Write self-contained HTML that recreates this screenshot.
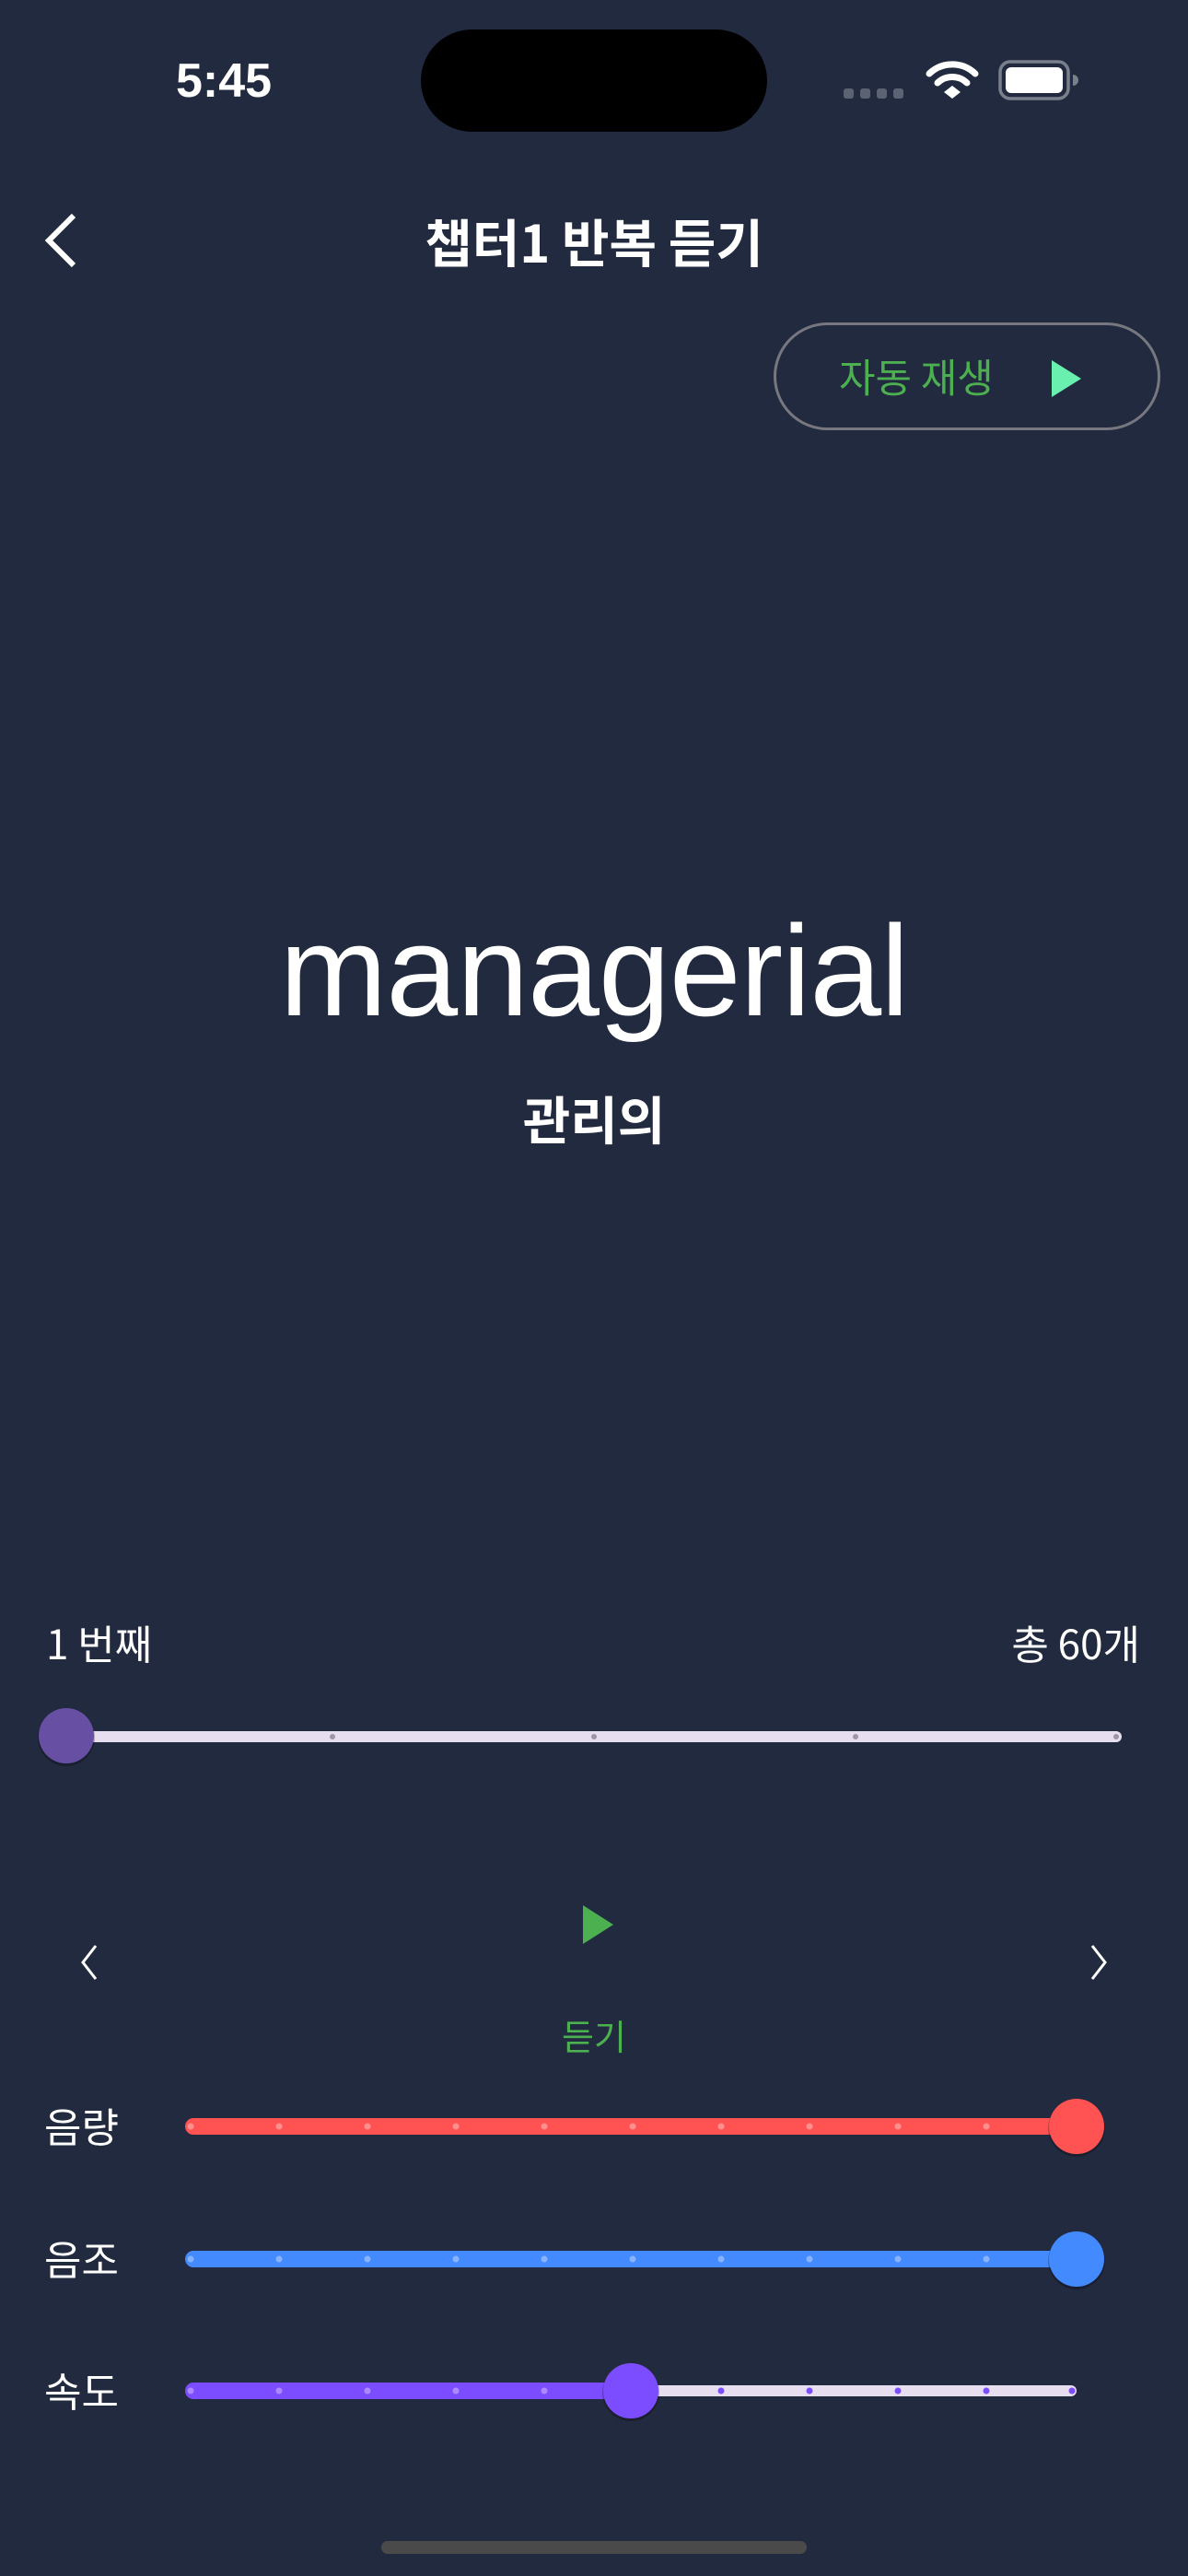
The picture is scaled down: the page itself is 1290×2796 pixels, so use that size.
<!DOCTYPE html>
<html><head><meta charset="utf-8"><style>
html,body{margin:0;padding:0}
body{width:1290px;height:2796px;background:#222a3f;position:relative;overflow:hidden;font-family:"Liberation Sans","Noto Sans CJK KR",sans-serif;color:#fff}
.t{position:absolute;white-space:nowrap;line-height:1}
</style></head><body>
<div class="t" style="left:183px;top:62px;font-size:52px;font-weight:700;width:120px;text-align:center">5:45</div>
<div class="t" style="left:0;top:234px;width:1290px;text-align:center;font-size:56px;font-weight:700;font-family:'Noto Sans CJK KR',sans-serif">챕터1 반복 듣기</div>
<div style="position:absolute;left:840px;top:350px;width:420px;height:117px;border:3px solid #77777f;border-radius:60px;box-sizing:border-box"></div>
<div class="t" style="left:911px;top:387px;font-size:43px;color:#4caf50;font-family:'Noto Sans CJK KR',sans-serif">자동 재생</div>
<div class="t" style="left:0;top:984px;width:1290px;text-align:center;font-size:140px;font-weight:400;letter-spacing:-1px">managerial</div>
<div class="t" style="left:0;top:1186px;width:1290px;text-align:center;font-size:56px;font-weight:700;font-family:'Noto Sans CJK KR',sans-serif">관리의</div>
<div class="t" style="left:50px;top:1760px;font-size:44px;font-family:'Noto Sans CJK KR',sans-serif">1 번째</div>
<div class="t" style="right:52px;top:1760px;font-size:44px;font-family:'Noto Sans CJK KR',sans-serif">총 60개</div>
<div class="t" style="left:0;top:2190px;width:1290px;text-align:center;font-size:38px;color:#4caf50;font-family:'Noto Sans CJK KR',sans-serif">듣기</div>
<div class="t" style="left:48px;top:2284px;font-size:44px;font-family:'Noto Sans CJK KR',sans-serif">음량</div>
<div class="t" style="left:48px;top:2428px;font-size:44px;font-family:'Noto Sans CJK KR',sans-serif">음조</div>
<div class="t" style="left:48px;top:2571px;font-size:44px;font-family:'Noto Sans CJK KR',sans-serif">속도</div>
<svg width="1290" height="2796" style="position:absolute;left:0;top:0" xmlns="http://www.w3.org/2000/svg">
<rect x="457" y="32" width="376" height="111" rx="55.5" fill="#000"/>
<g fill="#5b6272"><rect x="916" y="96" width="11" height="11" rx="3"/><rect x="934" y="96" width="11" height="11" rx="3"/><rect x="952" y="96" width="11" height="11" rx="3"/><rect x="970" y="96" width="11" height="11" rx="3"/></g>
<g fill="none" stroke="#fff" stroke-width="7" stroke-linecap="round"><path d="M1009 80 A36 36 0 0 1 1059 80"/><path d="M1018 90 A23 23 0 0 1 1050 90"/></g>
<path d="M1025 100 L1034 93 L1043 100 L1034 107 Z" fill="#fff"/>
<rect x="1086" y="67" width="74" height="40" rx="11" fill="none" stroke="#7a7f8c" stroke-width="3.5"/>
<rect x="1092" y="73" width="62" height="28" rx="6" fill="#fff"/>
<path d="M1165 81 a6 6 0 0 1 0 12 z" fill="#7a7f8c"/>
<path d="M80 234 L53 261 L80 288" fill="none" stroke="#fff" stroke-width="6"/>
<path d="M1142 391 L1174 411 L1142 431 Z" fill="#69f0ae"/>
<rect x="66" y="1879" width="1152" height="12" rx="6" fill="#e7def0"/>
<g fill="#9e96a8"><circle cx="361" cy="1885" r="3"/><circle cx="645" cy="1885" r="3"/><circle cx="929" cy="1885" r="3"/><circle cx="1212" cy="1885" r="3"/></g>
<circle cx="72" cy="1886" r="31" fill="#000" opacity=".25"/>
<circle cx="72" cy="1884" r="30" fill="#6750a4"/>
<path d="M633 2068 L666 2089 L633 2110 Z" fill="#4caf50"/>
<path d="M104 2112 L90 2130 L104 2148" fill="none" stroke="#fff" stroke-width="3"/>
<path d="M1186 2112 L1200 2130 L1186 2148" fill="none" stroke="#fff" stroke-width="3"/>
<rect x="201" y="2299" width="968" height="18" rx="9" fill="#ff5252"/>
<g fill="#ffffff" opacity=".35"><circle cx="207" cy="2308" r="3.5"/><circle cx="303" cy="2308" r="3.5"/><circle cx="399" cy="2308" r="3.5"/><circle cx="495" cy="2308" r="3.5"/><circle cx="591" cy="2308" r="3.5"/><circle cx="687" cy="2308" r="3.5"/><circle cx="783" cy="2308" r="3.5"/><circle cx="879" cy="2308" r="3.5"/><circle cx="975" cy="2308" r="3.5"/><circle cx="1071" cy="2308" r="3.5"/></g>
<circle cx="1169" cy="2310" r="31" fill="#000" opacity=".25"/>
<circle cx="1169" cy="2308" r="30" fill="#ff5252"/>
<rect x="201" y="2443" width="968" height="18" rx="9" fill="#448aff"/>
<g fill="#ffffff" opacity=".35"><circle cx="207" cy="2452" r="3.5"/><circle cx="303" cy="2452" r="3.5"/><circle cx="399" cy="2452" r="3.5"/><circle cx="495" cy="2452" r="3.5"/><circle cx="591" cy="2452" r="3.5"/><circle cx="687" cy="2452" r="3.5"/><circle cx="783" cy="2452" r="3.5"/><circle cx="879" cy="2452" r="3.5"/><circle cx="975" cy="2452" r="3.5"/><circle cx="1071" cy="2452" r="3.5"/></g>
<circle cx="1169" cy="2454" r="31" fill="#000" opacity=".25"/>
<circle cx="1169" cy="2452" r="30" fill="#448aff"/>
<rect x="680" y="2589" width="489" height="12" rx="6" fill="#e7def0"/>
<rect x="201" y="2586" width="490" height="18" rx="9" fill="#7c4dff"/>
<g fill="#ffffff" opacity=".35"><circle cx="207" cy="2595" r="3.5"/><circle cx="303" cy="2595" r="3.5"/><circle cx="399" cy="2595" r="3.5"/><circle cx="495" cy="2595" r="3.5"/><circle cx="591" cy="2595" r="3.5"/></g>
<g fill="#7c4dff"><circle cx="783" cy="2595" r="3.5"/><circle cx="879" cy="2595" r="3.5"/><circle cx="975" cy="2595" r="3.5"/><circle cx="1071" cy="2595" r="3.5"/><circle cx="1164" cy="2595" r="3.5"/></g>
<circle cx="685" cy="2597" r="31" fill="#000" opacity=".25"/>
<circle cx="685" cy="2595" r="30" fill="#7c4dff"/>
<rect x="414" y="2758" width="462" height="14" rx="7" fill="#4a4a4a"/>
</svg>
</body></html>
